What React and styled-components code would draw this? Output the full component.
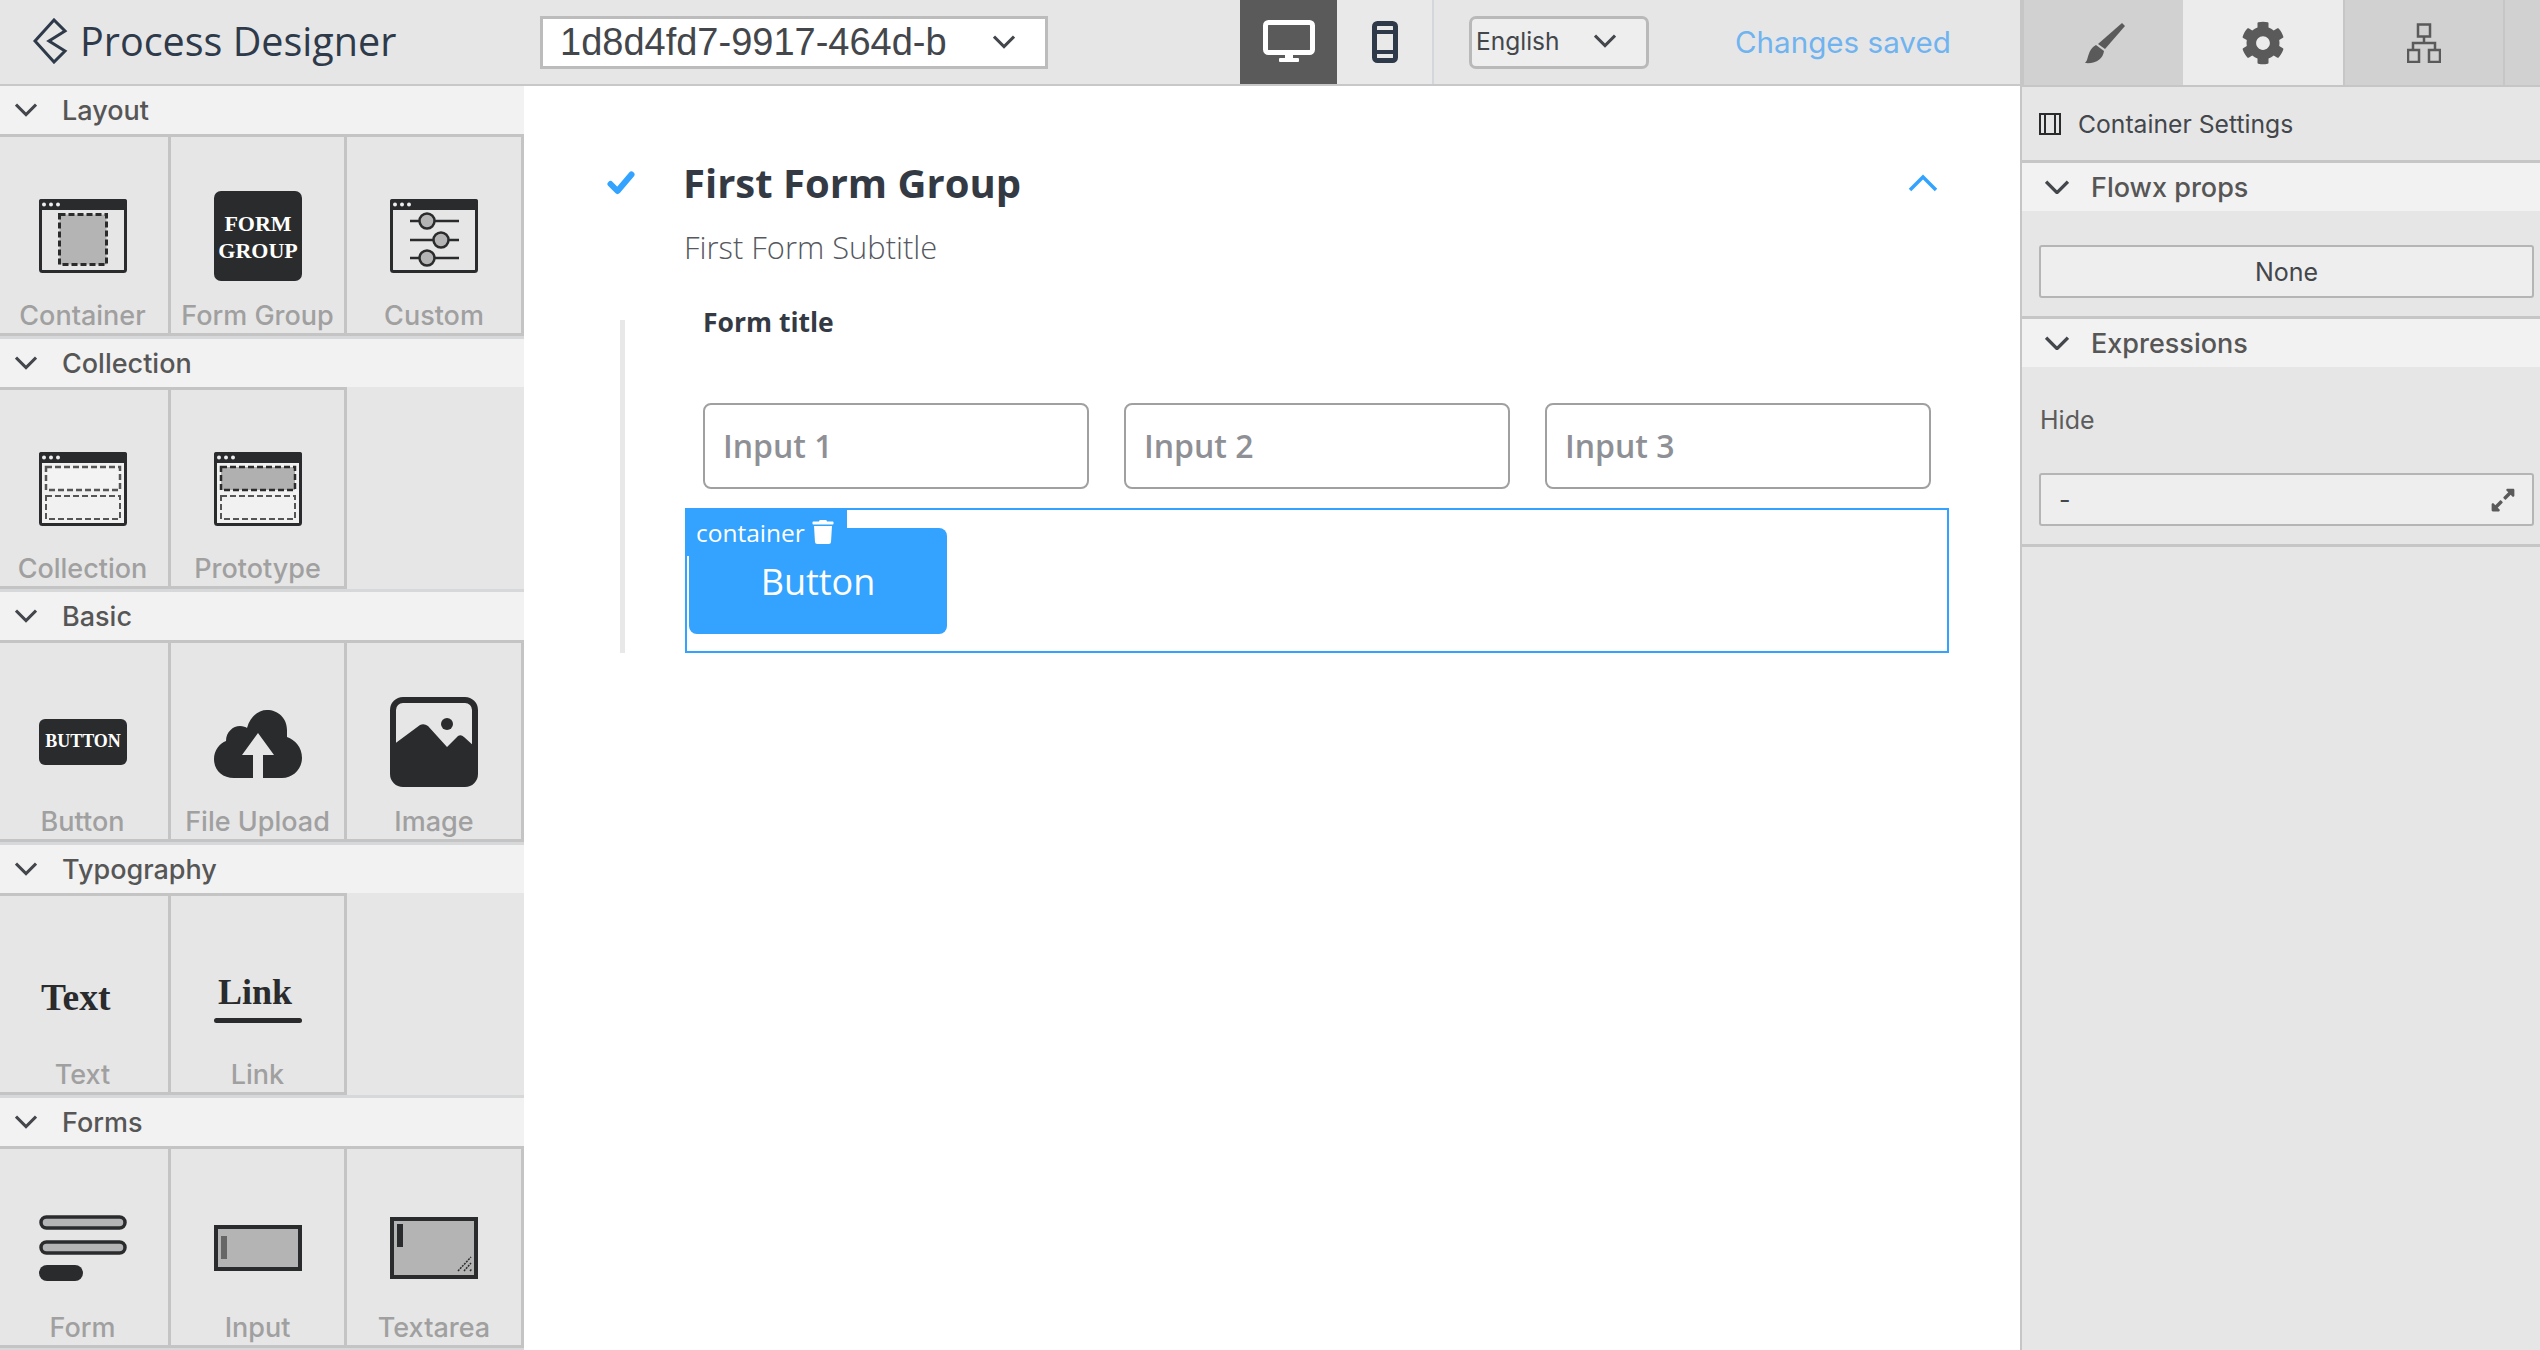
import React from "react";
import styled, { createGlobalStyle } from "styled-components";
import { FaCog, FaTrash, FaExpandAlt } from "react-icons/fa";

const Global = createGlobalStyle`
  html, body { margin: 0; padding: 0; width: 2540px; height: 1350px; overflow: hidden; background: #fff; }
  * { box-sizing: border-box; }
`;
const UI = `Inter, "Liberation Sans", sans-serif`;
const OPEN = `"Open Sans", "Noto Sans", sans-serif`;
const DARK = "#2a2b2d";
const BLUE = "#33a3ff";

const Page = styled.div`display: flex; width: 2540px; height: 1350px; font-family: ${UI};`;
const Main = styled.div`display: flex; flex-direction: column; width: 2020px; height: 100%;`;
const TopBar = styled.header`
  display: flex; align-items: center; height: 86px; background: #e6e6e6; border-bottom: 2px solid #c8c8c8; flex: none;
`;
const Brand = styled.div`
  width: 540px; height: 100%; display: flex; align-items: center; padding: 0 0 2px 33px; gap: 11px;
  color: #2e3a4a; font: 400 39.5px ${OPEN};
`;
const SelectBox = styled.div`
  width: 508px; height: 53px; background: #fff; border: 3px solid #bcbcbc; display: flex; align-items: center;
  justify-content: space-between; padding: 0 30px 0 17px; color: #43464b; font: 400 38px "Liberation Sans", sans-serif;
`;
const DeviceButton = styled.div`
  width: 97px; height: 84px; display: flex; align-items: center; justify-content: center;
  background: ${p => (p.$active ? "#5a5a5a" : "#e9e9e9")};
  margin-left: ${p => p.$offset || 0}px;
  border-right: ${p => (p.$active ? "0" : "2px solid #d3d7db")};
`;
const LangBox = styled.div`
  width: 180px; height: 53px; margin-left: 35px; background: #eeeeee; border: 3px solid #b9b9b9; border-radius: 7px;
  display: flex; align-items: center; justify-content: space-between; padding: 0 30px 2px 4px; color: #43464b; font-size: 24.5px;
`;
const Saved = styled.div`margin-left: 86px; padding-bottom: 1px; color: #6fb3f0; font-size: 29.6px; white-space: nowrap;`;
const Work = styled.div`display: flex; flex: 1; min-height: 0;`;

const Sidebar = styled.aside`width: 524px; flex: none; display: flex; flex-direction: column; background: #e6e6e6;`;
const Section = styled.section`height: 253px; display: flex; flex-direction: column;`;
const SectionHead = styled.div`
  height: ${p => p.$h || 48}px; flex: none; background: #f2f2f2; display: flex; align-items: center; color: #565656;
  font-size: 27px; font-weight: 500; padding-left: ${p => p.$pad || 15}px; gap: ${p => p.$gap || 25}px;
  border-top: ${p => (p.$line ? "3px solid #c6c6c6" : "0")};
`;
const Cells = styled.div`
  flex: 1; display: grid; grid-template-columns: 171px 176px 177px; border-bottom: 3px solid #d6d8da;
`;
const Cell = styled.div`
  display: flex; flex-direction: column; align-items: center; height: 202px;
  border: 3px solid #c4c4c4; border-left-width: 0;
  padding-right: ${p => (p.$first ? 3 : 0)}px;
`;
const IconSlot = styled.div`height: 161px; padding-top: 36px; display: flex; align-items: center; justify-content: center; flex: none;`;
const CellLabel = styled.div`line-height: 30px; margin-top: 3px; color: #a0a0a0; font-size: 27px; font-weight: 500; white-space: nowrap;`;

const Canvas = styled.main`flex: 1; background: #fff; min-width: 0;`;
const GroupHead = styled.div`display: flex; align-items: center; padding: 70px 82px 0 83px;`;
const GroupTitle = styled.h1`
  flex: 1; margin: 0 0 0 48px; font: 700 40px/54px ${OPEN}; color: #343a44;
`;
const GroupSub = styled.div`margin: 17px 0 0 160px; font: 300 30.9px/40px ${OPEN}; color: #55585e;`;
const GroupBody = styled.div`
  display: flow-root; margin: 53px 0 0 96px; width: 1329px; height: 333px;
  border-left: 5px solid #e8e8e8; padding-left: 60px;
`;
const FormArea = styled.div`padding-left: 18px;`;
const FormTitle = styled.div`margin: -13px 0 66px; font: 700 26.5px/30px ${OPEN}; color: #343a44;`;
const Inputs = styled.div`display: grid; grid-template-columns: repeat(3, 386px); gap: 35px;`;
const InputBox = styled.div`
  height: 86px; border: 2px solid #a0a0a0; border-radius: 8px; padding: 0 0 2px 18px; display: flex; align-items: center;
  color: #8e9095; font: 600 32px ${OPEN};
`;
const SelectionBox = styled.div`
  position: relative; margin-top: 19px; width: 1264px; height: 145px; border: 2px solid ${BLUE}; padding: 18px 2px;
`;
const Tag = styled.div`
  position: absolute; left: -2px; top: -2px; width: 162px; height: 48px; background: ${BLUE}; color: #fff; z-index: 1;
  display: flex; align-items: center; padding: 0 0 0 11px; gap: 6px; font: 400 24.5px ${OPEN};
`;
const BlueButton = styled.div`
  width: 258px; height: 106px; background: ${BLUE}; border-radius: 8px; color: #fff; display: flex; align-items: center;
  justify-content: center; font: 500 36px ${OPEN};
`;

const Panel = styled.aside`flex: 1; background: #e6e6e6; border-left: 2px solid #c6c6c6; display: flex; flex-direction: column;`;
const Tabs = styled.div`display: flex; height: 87px; flex: none;`;
const Tab = styled.div`
  width: ${p => p.$w || 161}px; display: flex; align-items: center; justify-content: center;
  background: ${p => (p.$active ? "#ececec" : "#d1d1d1")};
  border-left: ${p => (p.$active ? "0" : "2px solid #c6c6c6")};
  border-bottom: 2px solid #c6c6c6;
`;
const PanelTitle = styled.div`
  height: 73px; flex: none; display: flex; align-items: center; gap: 17px; padding-left: 17px; color: #43464b; font-size: 24.7px;
`;
const PanelBody = styled.div`
  padding: ${p => p.$pad}; border-bottom: 3px solid #c6c6c6; flex: none; display: flex; flex-direction: column;
`;
const Field = styled.div`
  width: 495px; height: 53px; margin-left: 17px; background: #eeeeee; border: 2px solid #b5b5b5; border-radius: 3px;
  display: flex; align-items: center; justify-content: ${p => (p.$center ? "center" : "space-between")};
  padding: ${p => (p.$center ? "0" : "0 16px 0 18px")}; color: #43464b; font-size: 25px;
`;
const FieldLabel = styled.div`margin: 0 0 38px 18px; line-height: 30px; color: #5c5c5c; font-size: 25px;`;

const Chevron = ({ size = 22, stroke = "#43464b", sw = 3 }) => (
  <svg width={size} height={size * 0.6} viewBox="0 0 22 13" fill="none">
    <path d="M1 1.5 11 11.5 21 1.5" stroke={stroke} strokeWidth={sw} />
  </svg>
);
const WindowFrame = ({ children }) => (
  <svg width="88" height="74" viewBox="0 0 88 74">
    <rect x="1.5" y="1.5" width="85" height="71" rx="2" fill="none" stroke={DARK} strokeWidth="3" />
    <rect x="0" y="0" width="88" height="11" rx="2" fill={DARK} />
    <circle cx="5" cy="5.5" r="2" fill="#eee" /><circle cx="12" cy="5.5" r="2" fill="#eee" /><circle cx="19" cy="5.5" r="2" fill="#eee" />
    {children}
  </svg>
);
const ContainerIcon = () => (
  <WindowFrame><rect x="20.5" y="15.5" width="47" height="50" fill="#b4b4b4" stroke={DARK} strokeWidth="3" strokeDasharray="6 3" /></WindowFrame>
);
const SliderRow = ({ y, cx }) => (
  <g>
    <line x1="20" x2="69" y1={y} y2={y} stroke={DARK} strokeWidth="2.5" />
    <circle cx={cx} cy={y} r="7.5" fill="#b4b4b4" stroke={DARK} strokeWidth="2.5" />
  </g>
);
const CustomIcon = () => (
  <WindowFrame><SliderRow y={22} cx={37} /><SliderRow y={41} cx={51} /><SliderRow y={59} cx={37} /></WindowFrame>
);
const CollectionIcon = ({ filled }) => (
  <WindowFrame>
    <rect x="3" y="11" width="82" height="60" fill="#f1f1f1" />
    <rect x="7" y="15" width="74" height="23" fill={filled ? "#b0b0b0" : "#f3f3f3"} stroke={filled ? DARK : "#555"} strokeWidth="2.5" strokeDasharray="6 3" />
    <rect x="7" y="44" width="74" height="23" fill="none" stroke="#555" strokeWidth="2" strokeDasharray="6 3" />
  </WindowFrame>
);
const SerifText = styled.text`font-family: "Liberation Serif", serif; font-weight: 700;`;
const FormGroupIcon = () => (
  <svg width="88" height="90" viewBox="0 0 88 90">
    <rect width="88" height="90" rx="7" fill={DARK} />
    <SerifText x="44" y="40" fill="#fff" fontSize="22" textAnchor="middle">FORM</SerifText>
    <SerifText x="44" y="67" fill="#fff" fontSize="22" textAnchor="middle">GROUP</SerifText>
  </svg>
);
const ButtonIcon = () => (
  <svg width="88" height="46" viewBox="0 0 88 46">
    <rect width="88" height="46" rx="6" fill={DARK} />
    <SerifText x="44" y="28" fill="#fff" fontSize="18" textAnchor="middle">BUTTON</SerifText>
  </svg>
);
const UploadIcon = () => (
  <svg width="88" height="72" viewBox="0 -4 88 72">
    <path fill={DARK} d="M20 68C8 68 0 60 0 49c0-9 6-16 12-18 0-9 7-15 14-15 3 0 6 1 7 2C36 7 44 0 53 0c11 0 20 8 20 20v7c8 3 15 10 15 21 0 11-9 20-20 20H49V45h11L44 23 28 45h11v23z" />
  </svg>
);
const ImageIcon = () => (
  <svg width="88" height="90" viewBox="0 0 88 90">
    <rect x="3" y="3" width="82" height="84" rx="10" fill="#e6e6e6" stroke={DARK} strokeWidth="6" />
    <path fill={DARK} d="M3 48 L30 28 Q34 26 38 29 L57 50 L68 39 Q71 37 74 40 L85 50 V80 Q85 87 78 87 H10 Q3 87 3 80Z" />
    <circle cx="57" cy="27" r="6" fill={DARK} />
  </svg>
);
const TextIcon = () => (
  <svg width="88" height="88" viewBox="0 0 88 88">
    <SerifText x="2" y="59" fill={DARK} fontSize="37.5">Text</SerifText>
  </svg>
);
const LinkIcon = () => (
  <svg width="88" height="88" viewBox="0 0 88 88">
    <SerifText x="4" y="53" fill={DARK} fontSize="36">Link</SerifText>
    <rect y="67" width="88" height="5" rx="2.5" fill={DARK} />
  </svg>
);
const FormIcon = () => (
  <svg width="88" height="66" viewBox="0 0 88 66">
    <rect x="2" y="2" width="84" height="11" rx="5.5" fill="#b4b4b4" stroke={DARK} strokeWidth="3.5" />
    <rect x="2" y="27" width="84" height="11" rx="5.5" fill="#b4b4b4" stroke={DARK} strokeWidth="3.5" />
    <rect x="0" y="50" width="44" height="16" rx="8" fill={DARK} />
  </svg>
);
const InputIcon = () => (
  <svg width="88" height="46" viewBox="0 0 88 46">
    <rect x="2" y="2" width="84" height="42" fill="#b4b4b4" stroke={DARK} strokeWidth="4" />
    <rect x="7" y="11" width="6" height="23" fill="#666" />
  </svg>
);
const TextareaIcon = () => (
  <svg width="88" height="62" viewBox="0 0 88 62">
    <rect x="2" y="2" width="84" height="58" fill="#b4b4b4" stroke={DARK} strokeWidth="4" />
    <rect x="7" y="7" width="6" height="23" fill={DARK} />
    <path d="M68 54 81 40M74 54 81 46M80 54l2-2" stroke={DARK} strokeWidth="1.5" strokeDasharray="2 1" />
  </svg>
);
const BackIcon = () => (
  <svg width="36" height="46" viewBox="0 0 36 46" fill="none">
    <path d="M2 23 21 2 32 13 16 23 32 33 21 44Z" stroke="#2e3a4a" strokeWidth="3" strokeLinejoin="miter" />
  </svg>
);
const DesktopIcon = () => (
  <svg width="52" height="44" viewBox="0 0 52 44" fill="none">
    <rect x="2.5" y="2.5" width="47" height="30" rx="3" stroke="#fff" strokeWidth="5" />
    <rect x="22" y="34" width="8" height="6" fill="#fff" />
    <rect x="16" y="38" width="20" height="4" rx="1" fill="#fff" />
  </svg>
);
const MobileIcon = () => (
  <svg width="26" height="42" viewBox="0 0 26 42" fill="none">
    <rect x="2.5" y="2.5" width="21" height="37" rx="3" stroke="#2e3a4a" strokeWidth="5" />
    <rect x="2" y="9" width="22" height="4" fill="#2e3a4a" /><rect x="2" y="29" width="22" height="4" fill="#2e3a4a" />
  </svg>
);
const BrushIcon = () => (
  <svg width="42" height="42" viewBox="0 0 42 42" fill="#5a5a5a">
    <path d="M39 1 42 4 22 27 15 22Z" />
    <path d="M13 23 21 29C20 37 13 42 2 41 6 38 4 28 13 23Z" />
  </svg>
);
const TreeIcon = () => (
  <svg width="34" height="40" viewBox="0 0 34 40" fill="none" stroke="#5a5a5a" strokeWidth="2.5">
    <rect x="11" y="1.5" width="12" height="12" />
    <path d="M17 13.5V20M6 27v-7h22v7" />
    <rect x="1" y="27" width="11" height="12" /><rect x="22" y="27" width="11" height="12" />
  </svg>
);
const FrameIcon = () => (
  <svg width="22" height="22" viewBox="0 0 22 22" fill="none" stroke="#2a2b2d" strokeWidth="2">
    <rect x="1" y="1" width="20" height="20" /><path d="M6 1v20M16 1v20" />
  </svg>
);
const CheckIcon = () => (
  <svg width="28" height="24" viewBox="0 0 28 24" fill="none">
    <path d="M3.5 13 10.5 20 24.5 3.5" stroke={BLUE} strokeWidth="6" strokeLinecap="round" strokeLinejoin="round" />
  </svg>
);
const UpIcon = () => (
  <svg width="30" height="18" viewBox="0 0 30 18" fill="none"><path d="M2 16 15 3 28 16" stroke={BLUE} strokeWidth="3.5" /></svg>
);

const palette = [
  { title: "Layout", items: [["Container", <ContainerIcon />], ["Form Group", <FormGroupIcon />], ["Custom", <CustomIcon />]] },
  { title: "Collection", items: [["Collection", <CollectionIcon />], ["Prototype", <CollectionIcon filled />]] },
  { title: "Basic", items: [["Button", <ButtonIcon />], ["File Upload", <UploadIcon />], ["Image", <ImageIcon />]] },
  { title: "Typography", items: [["Text", <TextIcon />], ["Link", <LinkIcon />]] },
  { title: "Forms", items: [["Form", <FormIcon />], ["Input", <InputIcon />], ["Textarea", <TextareaIcon />]] },
];

export default function App() {
  return (
    <Page>
      <Global />
      <Main>
        <TopBar>
          <Brand><BackIcon />Process Designer</Brand>
          <SelectBox>1d8d4fd7-9917-464d-b<Chevron /></SelectBox>
          <DeviceButton $active $offset={192}><DesktopIcon /></DeviceButton>
          <DeviceButton><MobileIcon /></DeviceButton>
          <LangBox>English<Chevron /></LangBox>
          <Saved>Changes saved</Saved>
        </TopBar>
        <Work>
          <Sidebar>
            {palette.map(s => (
              <Section key={s.title}>
                <SectionHead><Chevron />{s.title}</SectionHead>
                <Cells>
                  {s.items.map(([label, icon], i) => (
                    <Cell key={label} $first={i === 0}>
                      <IconSlot>{icon}</IconSlot>
                      <CellLabel>{label}</CellLabel>
                    </Cell>
                  ))}
                </Cells>
              </Section>
            ))}
          </Sidebar>
          <Canvas>
            <GroupHead>
              <CheckIcon />
              <GroupTitle>First Form Group</GroupTitle>
              <UpIcon />
            </GroupHead>
            <GroupSub>First Form Subtitle</GroupSub>
            <GroupBody>
              <FormArea>
                <FormTitle>Form title</FormTitle>
                <Inputs>
                  <InputBox>Input 1</InputBox>
                  <InputBox>Input 2</InputBox>
                  <InputBox>Input 3</InputBox>
                </Inputs>
              </FormArea>
              <SelectionBox>
                <Tag>container<FaTrash size={24} color="#fff" /></Tag>
                <BlueButton>Button</BlueButton>
              </SelectionBox>
            </GroupBody>
          </Canvas>
        </Work>
      </Main>
      <Panel>
        <Tabs>
          <Tab $w={161}><BrushIcon /></Tab>
          <Tab $active $w={160}><FaCog size={44} color="#5a5a5a" /></Tab>
          <Tab $w={160}><TreeIcon /></Tab>
          <Tab $w={37} />
        </Tabs>
        <PanelTitle><FrameIcon />Container Settings</PanelTitle>
        <SectionHead $line $pad={23} $gap={22} $h={51}><Chevron size={24} />Flowx props</SectionHead>
        <PanelBody $pad="34px 0 18px"><Field $center>None</Field></PanelBody>
        <SectionHead $pad={23} $gap={22} $h={48}><Chevron size={24} />Expressions</SectionHead>
        <PanelBody $pad="38px 0 18px">
          <FieldLabel>Hide</FieldLabel>
          <Field>-<FaExpandAlt size={26} color="#5a5a5a" /></Field>
        </PanelBody>
      </Panel>
    </Page>
  );
}
